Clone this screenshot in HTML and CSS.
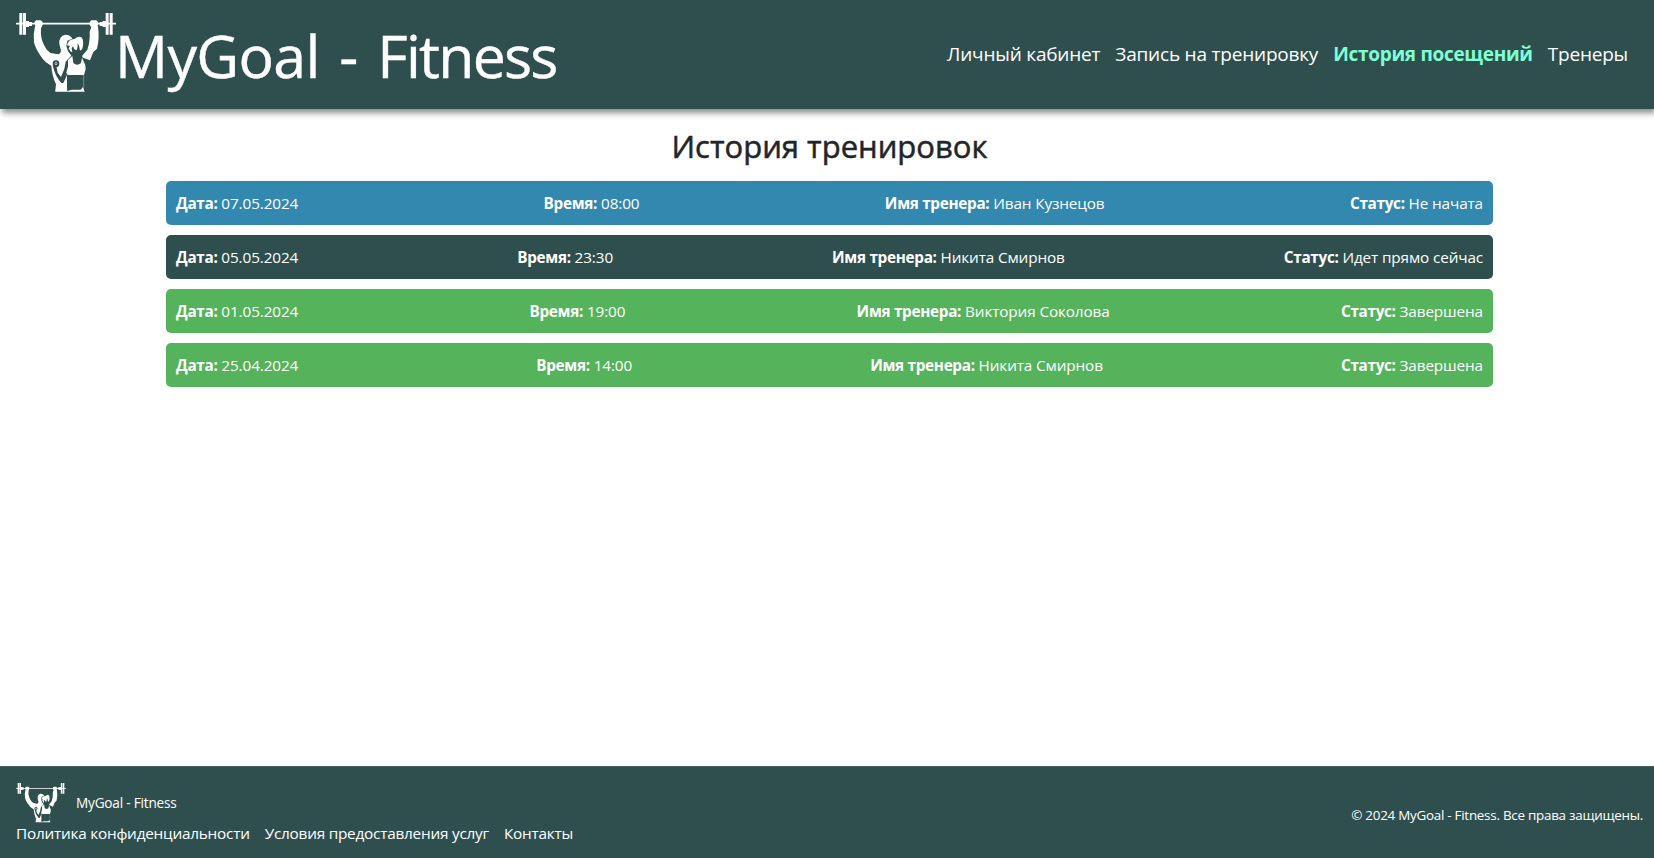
FILE: index.html
```html
<!DOCTYPE html>
<html lang="ru">
<head>
<meta charset="utf-8">
<title>MyGoal - Fitness</title>
<link rel="stylesheet" href="styles.css">
</head>
<body>
<svg class="sprite" aria-hidden="true">
  <symbol id="logo" viewBox="18 18 300 246">
    <!-- barbell and hands -->
    <path fill="#fff" d="M28 24H37V89H28zM39 24H48V89H39zM287 24H296V89H287zM299 24H308V89H299zM18 53.5H318V58.5H18zM48 48H57V66H48zM278 48H287V66H278zM55 51H66V63H55zM269 51H280V63H269z"/>
    <path fill="#fff" d="M73 52L78 46H92L98 51V60L93 68H77zM239 51L244 46H259L265 52L262 68H245L239 60z"/>
    <!-- man: raised arm, head, torso -->
    <path fill="#fff" d="M75 64H94Q90 88 97 108Q107 136 122 144L144 148Q152 147 153 136L148 118Q146 92 166 89Q181 89 187 101L172 107L169 123L174 138L184 152L171 166V225V258H136L138 238Q126 212 124 182Q104 172 92 153Q76 130 72 112Q69 88 75 64z"/>
    <!-- woman: bent arm with a dumbbell -->
    <path fill="#2f4f4f" d="M128 180L140 187L143 203L153 216L163 192L167 170L178 160L176 190Q172 212 160 234H154Q134 212 128 180z"/>
    <circle cx="138" cy="176" r="7" fill="#fff" stroke="#2f4f4f" stroke-width="6"/>
    <circle cx="138" cy="176" r="2.5" fill="#2f4f4f"/>
    <!-- woman: raised arm -->
    <path fill="#fff" d="M245 64H264Q269 100 261 131L250 141L240 166L219 158L216 153L232 134Q241 108 239 80z"/>
    <!-- woman: hair -->
    <path fill="#fff" d="M171 121Q176 101 194 102L201 97Q213 91 218 102Q222 119 216 133L210 137Q209 122 203 114Q204 128 200 136L193 133L189 124L185 130L187 142L181 139L176 130L180 123z"/>
    <!-- woman: top and waist -->
    <path fill="#fff" d="M174 165L187 153L190 174Q201 185 213 174L216 158L226 181L227 192L222 210H173L169 203L174 184z"/>
    <path fill="#fff" d="M174 257L186 254H212L219 246L224 260H136V256z"/>
    <path fill="none" stroke="#fff" d="M221 209V248"/>
    <path fill="none" stroke="#2f4f4f" stroke-width="2.5" d="M172.500 212V257"/>
  </symbol>
</svg>
<header class="header">
  <a class="brand"><svg class="brand-logo"><use href="#logo"/></svg><span class="brand-name">MyGoal - <span class="brand-tail">Fitness</span></span></a>
  <nav class="nav">
    <a>Личный кабинет</a><a>Запись на тренировку</a><a class="active">История посещений</a><a>Тренеры</a>
  </nav>
</header>
<main class="content">
  <h2 class="title">История тренировок</h2>
  <div class="row planned"><span><b>Дата:</b> 07.05.2024</span><span><b>Время:</b> 08:00</span><span><b>Имя тренера:</b> Иван Кузнецов</span><span><b>Статус:</b> Не начата</span></div>
  <div class="row current"><span><b>Дата:</b> 05.05.2024</span><span><b>Время:</b> 23:30</span><span><b>Имя тренера:</b> Никита Смирнов</span><span><b>Статус:</b> Идет прямо сейчас</span></div>
  <div class="row done"><span><b>Дата:</b> 01.05.2024</span><span><b>Время:</b> 19:00</span><span><b>Имя тренера:</b> Виктория Соколова</span><span><b>Статус:</b> Завершена</span></div>
  <div class="row done"><span><b>Дата:</b> 25.04.2024</span><span><b>Время:</b> 14:00</span><span><b>Имя тренера:</b> Никита Смирнов</span><span><b>Статус:</b> Завершена</span></div>
</main>
<footer class="footer">
  <div>
    <div class="footer-brand"><svg class="footer-logo"><use href="#logo"/></svg><span>MyGoal - Fitness</span></div>
    <div class="links"><a>Политика конфиденциальности</a><a>Условия предоставления услуг</a><a>Контакты</a></div>
  </div>
  <p class="copyright">© 2024 MyGoal - Fitness. Все права защищены.</p>
</footer>
</body>
</html>
```
FILE: styles.css
```css
* { box-sizing: border-box; }
body {
  margin: 0;
  min-height: 100vh;
  display: flex;
  flex-direction: column;
  background: #fff;
  color: #212529;
  font: 15.5px/24px "Open Sans", "Noto Sans", sans-serif;
}
.sprite { display: none; }
.header {
  height: 109px;
  padding: 0 26px 0 16px;
  display: flex;
  justify-content: space-between;
  background: #2f4f4f;
  color: #fff;
  box-shadow: 2px 4px 6px rgba(0, 0, 0, .45);
}
.brand { display: flex; padding-top: 11px; }
.brand-logo { width: 100px; height: 82px; }
.brand-name { margin-left: -1px; font-size: 59px; line-height: 89px; letter-spacing: -.67px; word-spacing: 5px; -webkit-text-stroke: .4px #fff; }
.brand-tail { letter-spacing: -1.8px; }
.nav { display: flex; gap: 15px; padding-top: 39px; font-size: 19px; line-height: 30px; letter-spacing: -.2px; }
.active { color: #7fffd4; font-weight: 700; letter-spacing: -.3px; }
.content { flex: 1; padding: 18px 161px 0 166px; }
.title { margin: 0 0 16px; text-align: center; font-size: 31px; line-height: 38px; font-weight: 500; -webkit-text-stroke: .5px #212529; }
.row {
  display: flex;
  justify-content: space-between;
  padding: 10px;
  margin-bottom: 10px;
  border-radius: 5px;
  color: #fff;
  font-size: 15.3px;
  letter-spacing: -.12px;
}
.row b { letter-spacing: -.3px; }
.planned { background: #3388af; }
.current { background: #2f4f4f; }
.done { background: #55b35b; }
.footer {
  height: 92px;
  padding: 15px 11px 0 16px;
  display: flex;
  justify-content: space-between;
  border-top: 1px solid #446161;
  background: #2f4f4f;
  color: #fff;
}
.footer-brand { display: flex; gap: 10px; height: 39px; font-size: 13.6px; letter-spacing: -.2px; }
.footer-brand span { padding-top: 9px; }
.footer-logo { width: 50px; height: 41px; }
.links { display: flex; gap: 15px; font-size: 15.3px; letter-spacing: -.21px; }
.copyright { margin: 0; padding-top: 21px; font-size: 13.4px; letter-spacing: -.25px; }
```
